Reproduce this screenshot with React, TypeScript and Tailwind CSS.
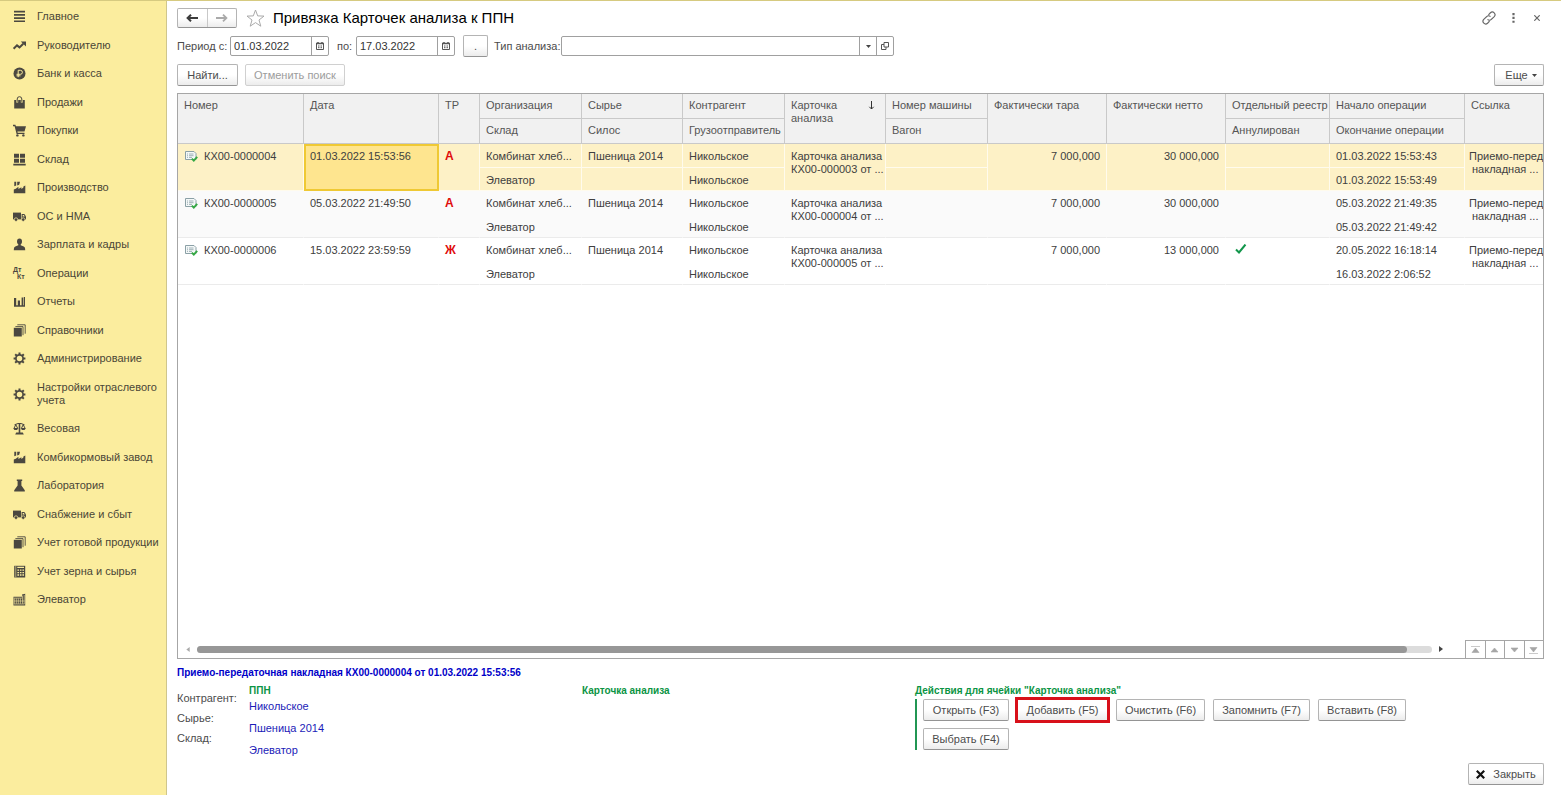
import type { ReactNode } from 'react'
import { clsx } from 'clsx'

const icons: Record<string, ReactNode> = {
  menu: <path d="M1 .8h11v1.7H1zM1 4h11v1.7H1zM1 7.200h11v1.7H1zM1 10.400h11v1.7H1z" />,
  trend: (
    <>
      <path d="M.6 9.800 4 6.4l2.500 2 3.800-3.600" fill="none" stroke="currentColor" strokeWidth="2" />
      <path d="M7.800 2.600H13v5z" />
    </>
  ),
  ruble: (
    <>
      <circle cx="6.5" cy="6.5" r="6" />
      <path
        d="M5.2 10.200V3.300h2.200a2 2 0 0 1 0 4H3.500M3.500 8.800h4"
        fill="none"
        stroke="#fbed9e"
        strokeWidth="1"
      />
    </>
  ),
  bag: (
    <>
      <path d="M1.200 4h10.600v8.500H1.200z" />
      <path d="M4.200 6.500V3.200a2.300 2.300 0 0 1 4.600 0v3.300" fill="none" stroke="#fbed9e" strokeWidth="2" />
      <path d="M4.200 5.800V3a2.300 2.300 0 0 1 4.600 0v2.800" fill="none" stroke="currentColor" strokeWidth="1" />
    </>
  ),
  cart: (
    <>
      <path d="M0 .8h2.400l.5 1.400H13l-1.500 5.400H4.400l.3 1.100h6.800V10H3.600L1.600 2.200H0z" />
      <circle cx="4.400" cy="11.400" r="1.200" />
      <circle cx="10.400" cy="11.400" r="1.200" />
    </>
  ),
  store: <path d="M1 .8h5v4H1zM7 .8h5v4H7zM1 5.800h5v4H1zM7 5.800h5v4H7zM.3 10.800h12.400v1.600H.3z" />,
  factory: (
    <path d="M.8 12.200V8.400l2-.6 2.600-2v2.100l3-1.600v1.600l2-1.300V5.400l1.900-1v7.800zM1.300.8h1.900v3.600l-1.900.8zM4.200.8H7l-.8 3-2 .8z" />
  ),
  truck: (
    <>
      <path d="M0 2.600h8v6.800H0z" />
      <path d="M8.600 4h2.800L13 6.600v2.800H8.600z" />
      <path d="M9.700 5h1.200l.8 1.600h-2z" fill="#fbed9e" />
      <circle cx="3" cy="9.600" r="1.800" stroke="#fbed9e" strokeWidth=".700" />
      <circle cx="10.200" cy="9.600" r="1.800" stroke="#fbed9e" strokeWidth=".700" />
    </>
  ),
  person: (
    <>
      <ellipse cx="6.500" cy="3.500" rx="2.500" ry="2.900" />
      <path d="M5.300 5.500h2.400v1.800l3 1.200c1 .400 1.500 1.300 1.500 3.800H.8c0-2.500.5-3.400 1.500-3.800l3-1.200z" />
    </>
  ),
  dtkt: (
    <>
      <text x="0" y="5" fontSize="7" fontWeight="bold" fontFamily="Liberation Sans, sans-serif">
        Дт
      </text>
      <text x="4" y="12" fontSize="7" fontWeight="bold" fontFamily="Liberation Sans, sans-serif">
        Кт
      </text>
    </>
  ),
  chart: <path d="M1 3h2.200v7.500H1zM4.800 5.500H7v5H4.800zM8.600 2.500h1.600v8H8.600zM1 10.300h11v1.500H1zM10.800 2H12v9h-1.200z" />,
  books: (
    <>
      <path d="M.8 3.800h8v8.700h-8z" />
      <path d="M2.400 2.600H10v8.600M4.300.8h7.900v8.900" fill="none" stroke="currentColor" strokeWidth=".900" />
    </>
  ),
  gear: (
    <>
      <circle cx="6.500" cy="6.500" r="3.600" fill="none" stroke="currentColor" strokeWidth="1.700" />
      <path
        d="M6.500.6v2.200M6.500 10.200v2.200M.6 6.500h2.200M10.200 6.500h2.200M2.200 2.200l1.700 1.700M9.100 9.100l1.700 1.700M2.200 10.800l1.700-1.700M9.100 3.900l1.700-1.700"
        stroke="currentColor"
        strokeWidth="2"
      />
    </>
  ),
  scales: (
    <>
      <path d="M5.700 1h1.600v9.500h2.500l1 2H2.200l1-2h2.500z" />
      <path d="M1.500 2.800 5 1.500h3l3.500 1.300M2.800 2.700.9 6.500h3.900zM10.200 2.700 8.300 6.500h3.900z" fill="none" stroke="currentColor" />
      <path d="M.3 6.400h4.900L4 8H1.500zM7.800 6.400h4.900L11.500 8H9z" />
    </>
  ),
  flask: <path d="M3.800.6h5.400v1.300H8.400v4.600l3.400 4.800v1.200H1.200v-1.200l3.400-4.800V1.900h-.8z" />,
  calc: (
    <>
      <path d="M1.200.8h11v11.700h-11z" />
      <path
        d="M4.300 2.400h6.700M4.400 5.200H6M6.900 5.200h1.600M9.400 5.200H11M4.400 7.600H6M6.900 7.600h1.600M9.400 7.600H11M4.400 10H6M6.900 10h1.600M9.400 10H11"
        stroke="#fbed9e"
        strokeWidth="1.300"
      />
      <path d="M2.800 1v11.300" stroke="#fbed9e" strokeWidth=".600" />
    </>
  ),
  elevator: (
    <>
      <path d="M.5 3.800H9V1.600l3.200-.8v11.700H.5z" />
      <path d="M1.300 5.300v5.500M3.300 5.300v5.500M5.300 5.300v5.500M7.400 5.300v5.500M9.500 2.500v8.300M1 5.100h8M1 8h10.500M1 11h10.500M11.200 2v9" stroke="#fbed9e" strokeWidth=".600" />
    </>
  )
}

const sections = [
  ['menu', 'Главное'],
  ['trend', 'Руководителю'],
  ['ruble', 'Банк и касса'],
  ['bag', 'Продажи'],
  ['cart', 'Покупки'],
  ['store', 'Склад'],
  ['factory', 'Производство'],
  ['truck', 'ОС и НМА'],
  ['person', 'Зарплата и кадры'],
  ['dtkt', 'Операции'],
  ['chart', 'Отчеты'],
  ['books', 'Справочники'],
  ['gear', 'Администрирование'],
  ['gear', 'Настройки отраслевого учета'],
  ['scales', 'Весовая'],
  ['factory', 'Комбикормовый завод'],
  ['flask', 'Лаборатория'],
  ['truck', 'Снабжение и сбыт'],
  ['books', 'Учет готовой продукции'],
  ['calc', 'Учет зерна и сырья'],
  ['elevator', 'Элеватор']
]

const rows = [
  {
    number: 'КХ00-0000004',
    date: '01.03.2022 15:53:56',
    tr: 'А',
    card: 'КХ00-000003 от ...',
    net: '30 000,000',
    registry: false,
    start: '01.03.2022 15:53:43',
    end: '01.03.2022 15:53:49'
  },
  {
    number: 'КХ00-0000005',
    date: '05.03.2022 21:49:50',
    tr: 'А',
    card: 'КХ00-000004 от ...',
    net: '30 000,000',
    registry: false,
    start: '05.03.2022 21:49:35',
    end: '05.03.2022 21:49:42'
  },
  {
    number: 'КХ00-0000006',
    date: '15.03.2022 23:59:59',
    tr: 'Ж',
    card: 'КХ00-000005 от ...',
    net: '13 000,000',
    registry: true,
    start: '20.05.2022 16:18:14',
    end: '16.03.2022 2:06:52'
  }
]

const Sidebar = () => (
  <nav className="w-[167px] shrink-0 border-r border-[#cfc68c] bg-[#fbed9e] pt-px">
    <ul>
      {sections.map(([icon, title]) => (
        <li key={title} className="pt-2 pb-[7px] odd:pb-2">
          <a href="#" className="flex items-center gap-[11px] pl-[13px] text-[#4a4637]">
            <svg viewBox="0 0 13 13" fill="currentColor" className="size-[13px] shrink-0 overflow-visible text-[#4b4840]">
              {icons[icon]}
            </svg>
            <span>{title}</span>
          </a>
        </li>
      ))}
    </ul>
  </nav>
)

interface ButtonProps {
  children: ReactNode
  className?: string
  disabled?: boolean
}

const Button = ({ children, className, disabled }: ButtonProps) => (
  <button
    type="button"
    disabled={disabled}
    className={clsx(
      'flex h-[22px] shrink-0 items-center justify-center border bg-linear-to-b from-white from-50% to-[#ececec] whitespace-nowrap',
      disabled ? 'border-[#d0d0d0] text-[#9c9c9c]' : 'border-[#b4b4b4] border-b-[#949494] text-[#4c4c4c]',
      className ?? 'rounded-xs'
    )}
  >
    {children}
  </button>
)

const DateField = ({ id, value }: { id: string; value: string }) => (
  <div className="flex h-5 w-[99px] rounded-xs border border-[#a0a0a0] bg-white">
    <input id={id} defaultValue={value} className="w-full min-w-0 px-[3px] text-[#333] outline-none" />
    <button
      type="button"
      aria-label="Выбрать дату"
      className="flex w-[17px] shrink-0 items-center justify-center border-l border-[#a0a0a0]"
    >
      <svg viewBox="0 0 8 8" className="size-2" fill="none" stroke="#555">
        <path d="M.5 1.500h7v6h-7z" />
        <path d="M0 1.500h8M2 0v2M6 0v2" strokeWidth="1.500" />
        <path d="M2 4h4M2 5.700h4" strokeDasharray="1 .500" />
      </svg>
    </button>
  </div>
)

const DocIcon = () => (
  <svg viewBox="0 0 13 12" className="h-3 w-[13px] shrink-0">
    <path d="M.500 1.500h8.500l2 2v6H.500z" fill="#f4f8f8" stroke="#8ba0a6" />
    <path d="M2 4h1M4 4h4.500M2 5.700h1M4 5.700h4.500M2 7.400h1M4 7.400h3" stroke="#8ba0a6" strokeWidth=".800" />
    <path d="m6.800 8.600 2 2L12.200 6.800" fill="none" stroke="#35a844" strokeWidth="1.900" />
  </svg>
)

const head = 'border-r border-b border-[#c9c9c9] px-[6px] pt-[5px] text-left align-top font-normal'
const cell = 'overflow-hidden border-r border-b px-[6px] pt-[6px] align-top whitespace-nowrap'

const DocumentsTable = () => (
  <table className="w-full table-fixed border-separate border-spacing-0 text-[#404040]">
    <colgroup>
      <col className="w-[126px]" />
      <col className="w-[135px]" />
      <col className="w-[41px]" />
      <col className="w-[102px]" />
      <col className="w-[101px]" />
      <col className="w-[102px]" />
      <col className="w-[101px]" />
      <col className="w-[102px]" />
      <col className="w-[119px]" />
      <col className="w-[119px]" />
      <col className="w-[104px]" />
      <col className="w-[135px]" />
      <col />
    </colgroup>
    <thead className="bg-[#f1f1f1] text-[#555]">
      <tr className="h-[25px]">
        <th rowSpan={2} className={head}>Номер</th>
        <th rowSpan={2} className={head}>Дата</th>
        <th rowSpan={2} className={head}>ТР</th>
        <th className={head}>Организация</th>
        <th className={head}>Сырье</th>
        <th className={head}>Контрагент</th>
        <th rowSpan={2} className={head}>
          <div className="flex justify-between">
            <span>
              Карточка
              <br />
              анализа
            </span>
            <svg viewBox="0 0 7 9" className="mt-[2px] mr-1 h-[9px] w-[7px]" fill="none" stroke="#333">
              <path d="M3.500 0v8M1.300 5.800l2.200 2.200 2.200-2.200" />
            </svg>
          </div>
        </th>
        <th className={head}>Номер машины</th>
        <th rowSpan={2} className={head}>Фактически тара</th>
        <th rowSpan={2} className={head}>Фактически нетто</th>
        <th className={clsx(head, 'whitespace-nowrap')}>Отдельный реестр</th>
        <th className={head}>Начало операции</th>
        <th rowSpan={2} className="border-b border-[#c9c9c9] px-[6px] pt-[5px] text-left align-top font-normal">
          Ссылка
        </th>
      </tr>
      <tr className="h-[25px]">
        <th className={head}>Склад</th>
        <th className={head}>Силос</th>
        <th className={head}>Грузоотправитель</th>
        <th className={head}>Вагон</th>
        <th className={head}>Аннулирован</th>
        <th className={head}>Окончание операции</th>
      </tr>
    </thead>
    {rows.map((row, i) => {
      const active = i === 0
      const upper = clsx(cell, active ? 'border-[#fffbed]' : 'border-transparent')
      const full = clsx(cell, active ? 'border-[#fffbed]' : 'border-r-transparent border-b-[#ebebeb]')
      return (
        <tbody key={row.number} className={clsx(active && 'bg-[#fdf1c6]', i === 1 && 'bg-[#fafafa]')}>
          <tr className="h-6">
            <td rowSpan={2} className={full}>
              <span className="flex gap-[6px] pl-px">
                <DocIcon />
                {row.number}
              </span>
            </td>
            <td
              rowSpan={2}
              className={
                active
                  ? 'border-2 border-[#efc934] bg-[#fee58f] px-1 pt-1 align-top whitespace-nowrap'
                  : full
              }
            >
              {row.date}
            </td>
            <td rowSpan={2} className={clsx(full, 'text-xs leading-[13px] font-bold text-[#e00b0b]')}>
              {row.tr}
            </td>
            <td className={upper}>Комбинат хлеб...</td>
            <td className={upper}>Пшеница 2014</td>
            <td className={upper}>Никольское</td>
            <td rowSpan={2} className={full}>
              Карточка анализа
              <br />
              {row.card}
            </td>
            <td className={upper} />
            <td rowSpan={2} className={clsx(full, 'text-right')}>7 000,000</td>
            <td rowSpan={2} className={clsx(full, 'text-right')}>{row.net}</td>
            <td className={upper}>
              {row.registry && (
                <svg viewBox="0 0 12 10" className="ml-[3px] h-[10px] w-3" fill="none" stroke="#12964b" strokeWidth="2">
                  <path d="M1 5.500 4 8.500 10.500.500" />
                </svg>
              )}
            </td>
            <td className={upper}>{row.start}</td>
            <td
              rowSpan={2}
              className={clsx(
                'border-b pt-[6px] pl-1 align-top whitespace-nowrap',
                active ? 'border-[#fffbed]' : 'border-[#ebebeb]'
              )}
            >
              Приемо-перед
              <br />
              <span className="pl-[3px]">накладная ...</span>
            </td>
          </tr>
          <tr className="h-[23px]">
            {['Элеватор', '', 'Никольское', '', '', row.end].map((text, n) => (
              <td key={n} className={full}>
                {text}
              </td>
            ))}
          </tr>
        </tbody>
      )
    })}
  </table>
)

const pagerArrows = [
  ['В начало', 'M0 .500h9M1 6.500h7L4.500 2z'],
  ['Вверх', 'M1 6h7L4.500 2z'],
  ['Вниз', 'M1 2h7L4.500 6z'],
  ['В конец', 'M1 1.500h7L4.500 6zM0 7.500h9']
]

const TableFooter = () => (
  <div className="mt-auto flex h-[18px] items-center">
    <svg viewBox="0 0 4 6" className="ml-2 h-[5px] w-1" fill="#aaa">
      <path d="M4 0v6L0 3z" />
    </svg>
    <div className="mx-[7px] h-[7px] flex-1 rounded-full bg-[#dcdcdc]">
      <div className="h-full w-[98%] rounded-full bg-[#979797]" />
    </div>
    <svg viewBox="0 0 4 6" className="mr-[22px] h-[6px] w-1" fill="#444">
      <path d="M0 0v6l4-3z" />
    </svg>
    <div className="grid h-full w-[78px] grid-cols-4 border-t border-[#a6a6a6]">
      {pagerArrows.map(([label, d]) => (
        <button
          key={label}
          type="button"
          aria-label={label}
          className="flex items-center justify-center border-l border-[#a6a6a6]"
        >
          <svg viewBox="0 0 9 8" className="h-2 w-[9px]" fill="#a6a6a6" stroke="#a6a6a6" strokeWidth=".600">
            <path d={d} />
          </svg>
        </button>
      ))}
    </div>
  </div>
)

const Details = () => (
  <section className="flex pt-[5px]">
    <dl className="flex w-[405px] shrink-0">
      <div className="flex w-[72px] flex-col gap-[7px] pt-2 text-[#4c4c4c]">
        <dt>Контрагент:</dt>
        <dt>Сырье:</dt>
        <dt>Склад:</dt>
      </div>
      <div>
        <h2 className="text-[10px] font-bold text-[#0b9444]">ППН</h2>
        <div className="flex flex-col gap-[9px] pt-[3px] text-[#1c1cb8]">
          <dd>Никольское</dd>
          <dd>Пшеница 2014</dd>
          <dd>Элеватор</dd>
        </div>
      </div>
    </dl>
    <h2 className="w-[333px] shrink-0 text-[10px] font-bold text-[#0b9444]">Карточка анализа</h2>
    <div className="min-w-0 flex-1">
      <h2 className="text-[10px] font-bold text-[#0b9444]">Действия для ячейки &quot;Карточка анализа&quot;</h2>
      <div className="mt-[2px] flex flex-col gap-[7px] border-l-2 border-[#219653] pl-[6px]">
        <div className="flex gap-2">
          <Button className="w-[86px] rounded-xs">Открыть (F3)</Button>
          <Button className="w-[91px] outline-[3px] -outline-offset-1 outline-[#d8101a]">Добавить (F5)</Button>
          <Button className="w-[89px] rounded-xs">Очистить (F6)</Button>
          <Button className="w-[97px] rounded-xs">Запомнить (F7)</Button>
          <Button className="w-[88px] rounded-xs">Вставить (F8)</Button>
        </div>
        <Button className="w-[86px] rounded-xs">Выбрать (F4)</Button>
      </div>
    </div>
  </section>
)

const App = () => {
  return (
    <div className="flex min-h-screen border-t border-[#d6ca80] bg-white font-['Liberation_Sans',Arial,sans-serif] text-[11px] leading-[13px]">
      <Sidebar />
      <main className="flex min-w-0 flex-1 flex-col pt-[6px] pr-[17px] pb-[10px] pl-[10px]">
        <header className="flex h-[21px] items-center">
          <div className="flex h-5 w-[60px] rounded-xs border border-[#b4b4b4] border-b-[#949494] bg-linear-to-b from-white from-50% to-[#ececec]">
            <button type="button" aria-label="Назад" className="flex flex-1 items-center justify-center border-r border-[#c8c8c8]">
              <svg viewBox="0 0 12 8" className="h-2 w-3" fill="none" stroke="#3c3c3c" strokeWidth="2">
                <path d="M12 4H1.500M5 .700 1.600 4 5 7.300" />
              </svg>
            </button>
            <button type="button" aria-label="Вперед" className="flex flex-1 items-center justify-center">
              <svg viewBox="0 0 12 8" className="h-2 w-3" fill="none" stroke="#aaa" strokeWidth="1.800">
                <path d="M0 4h10.500M7 .700 10.400 4 7 7.300" />
              </svg>
            </button>
          </div>
          <button type="button" aria-label="В избранное" className="ml-[9px]">
            <svg viewBox="0 0 19 18" className="h-[18px] w-[19px]" fill="none" stroke="#aaa">
              <path d="m9.500 1 2.200 5.900 6.300.200-5 3.900 1.800 6.200-5.300-3.600-5.300 3.600L6 11 1 7.100l6.300-.200z" />
            </svg>
          </button>
          <h1 className="ml-2 text-[15px] leading-5 text-black">Привязка Карточек анализа к ППН</h1>
          <div className="ml-auto flex items-center text-[#666]">
            <button type="button" aria-label="Получить ссылку">
              <svg viewBox="0 0 24 24" className="size-[14px]" fill="none" stroke="currentColor" strokeWidth="2">
                <path d="M9.500 14.500a4.500 4.500 0 0 0 6.500 0l5-5a4.600 4.600 0 0 0-6.500-6.500l-3.500 3.500M14.500 9.500a4.500 4.500 0 0 0-6.500 0l-5 5a4.600 4.600 0 0 0 6.500 6.500l3.500-3.500" />
              </svg>
            </button>
            <button type="button" aria-label="Меню" className="ml-4">
              <svg viewBox="0 0 3 11" className="h-[10px] w-[3px]" fill="currentColor">
                <path d="M.300 0h2.400v2.400H.300zM.300 4.200h2.400v2.400H.300zM.300 8.400h2.400v2.400H.300z" />
              </svg>
            </button>
            <button type="button" aria-label="Закрыть окно" className="mr-1 ml-[19px]">
              <svg viewBox="0 0 6 6" className="size-[6px]" stroke="currentColor" strokeWidth="1.200">
                <path d="m.3.300 5.400 5.400M5.700.300.300 5.700" />
              </svg>
            </button>
          </div>
        </header>

        <div className="mt-[7px] flex items-center text-[#4c4c4c]">
          <label htmlFor="from" className="w-[53px] whitespace-nowrap">Период с:</label>
          <DateField id="from" value="01.03.2022" />
          <label htmlFor="to" className="w-[27px] pl-2">по:</label>
          <DateField id="to" value="17.03.2022" />
          <Button className="mr-[6px] ml-2 w-[25px] rounded-xs">.</Button>
          <label htmlFor="kind" className="w-[67px] whitespace-nowrap">Тип анализа:</label>
          <div className="flex h-5 w-[333px] rounded-xs border border-[#a0a0a0]">
            <input id="kind" className="min-w-0 flex-1 px-1 outline-none" />
            <button type="button" aria-label="Список" className="flex w-[17px] items-center justify-center border-l border-[#a0a0a0]">
              <svg viewBox="0 0 5 3" className="h-[3px] w-[5px]" fill="#444">
                <path d="M0 0h5L2.500 3z" />
              </svg>
            </button>
            <button type="button" aria-label="Открыть" className="flex w-[17px] items-center justify-center border-l border-[#a0a0a0]">
              <svg viewBox="0 0 8 8" className="size-2" fill="none" stroke="#555">
                <path d="M3 .500h4.500V5H3zM3 2.500H.500v5h4.500V5" />
              </svg>
            </button>
          </div>
        </div>

        <div className="mt-[7px] flex">
          <Button className="w-[61px] rounded-xs">Найти...</Button>
          <Button disabled className="ml-[7px] w-[100px] rounded-xs">Отменить поиск</Button>
          <Button className="ml-auto w-[50px] gap-1 rounded-xs pl-1">
            Еще
            <svg viewBox="0 0 5 3" className="h-[3px] w-[5px]" fill="#444">
              <path d="M0 0h5L2.500 3z" />
            </svg>
          </Button>
        </div>

        <div className="mt-[7px] flex flex-1 flex-col overflow-hidden border border-[#a6a6a6]">
          <DocumentsTable />
          <TableFooter />
        </div>

        <p className="pt-[7px] text-[10px] font-bold text-[#0000c8]">
          Приемо-передаточная накладная КХ00-0000004 от 01.03.2022 15:53:56
        </p>
        <Details />
        <footer className="mt-[6px] flex justify-end">
          <Button className="w-[76px] gap-2 rounded-xs">
            <svg viewBox="0 0 9 9" className="size-[9px]" stroke="#111" strokeWidth="2.200">
              <path d="m.800.800 7.400 7.400M8.200.800.800 8.200" />
            </svg>
            Закрыть
          </Button>
        </footer>
      </main>
    </div>
  )
}

export default App
